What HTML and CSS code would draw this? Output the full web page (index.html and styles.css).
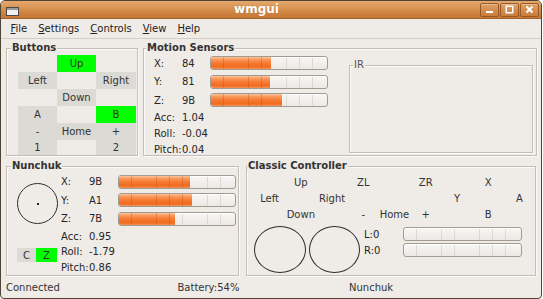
FILE: index.html
```html
<!DOCTYPE html>
<html>
<head>
<meta charset="utf-8">
<title>wmgui</title>
<link rel="stylesheet" href="styles.css">
</head>
<body>
<div class="window">
  <div class="titlebar">
    <svg class="winicon" width="13" height="9" viewBox="0 0 13 9"><rect x="0.5" y="0.5" width="12" height="8" fill="#f2f2f2" stroke="#4a4a4a"/><rect x="1" y="1" width="11" height="2" fill="#9a9a9a"/></svg>
    <div class="title">wmgui</div>
    <div class="wbtns">
      <div class="wbtn"><svg width="17" height="12" viewBox="0 0 17 12"><rect x="5" y="7" width="7" height="2" fill="#fff"/></svg></div>
      <div class="wbtn"><svg width="17" height="12" viewBox="0 0 17 12"><rect x="5.25" y="2.25" width="6.5" height="6.5" fill="none" stroke="#fff" stroke-width="1.5"/></svg></div>
      <div class="wbtn"><svg width="17" height="12" viewBox="0 0 17 12"><path d="M5.5 2.5 L11.5 8.5 M11.5 2.5 L5.5 8.5" stroke="#fff" stroke-width="2" fill="none"/></svg></div>
    </div>
  </div>
  <div class="menubar">
    <span class="menu"><u>F</u>ile</span>
    <span class="menu"><u>S</u>ettings</span>
    <span class="menu"><u>C</u>ontrols</span>
    <span class="menu"><u>V</u>iew</span>
    <span class="menu"><u>H</u>elp</span>
  </div>
  <div class="content">
    <div class="row row-top">
      <section class="frame frame-buttons">
        <div class="ftitle">Buttons</div>
        <div class="bgrid">
          <div class="cell"></div><div class="cell on">Up</div><div class="cell"></div>
          <div class="cell g">Left</div><div class="cell"></div><div class="cell g">Right</div>
          <div class="cell"></div><div class="cell g">Down</div><div class="cell"></div>
          <div class="cell g">A</div><div class="cell"></div><div class="cell on">B</div>
          <div class="cell g">-</div><div class="cell g">Home</div><div class="cell g">+</div>
          <div class="cell g">1</div><div class="cell"></div><div class="cell g">2</div>
        </div>
      </section>
      <section class="frame frame-motion">
        <div class="ftitle">Motion Sensors</div>
        <div class="mgrid">
          <span>X:</span><span>84</span><div class="bar"><div class="fill" style="width:51.76%"></div></div>
          <span>Y:</span><span>81</span><div class="bar"><div class="fill" style="width:50.59%"></div></div>
          <span>Z:</span><span>9B</span><div class="bar"><div class="fill" style="width:60.78%"></div></div>
          <span>Acc:</span><span>1.04</span><span></span>
          <span>Roll:</span><span>-0.04</span><span></span>
          <span>Pitch:</span><span>0.04</span><span></span>
          <section class="frame frame-ir">
            <div class="ftitle plain">IR</div>
          </section>
        </div>
      </section>
    </div>
    <div class="row row-bottom">
      <section class="frame frame-nunchuk">
        <div class="ftitle">Nunchuk</div>
        <div class="ngrid">
          <div class="nstick"><div class="dot"></div></div>
          <div class="cz"><div class="cell g czc">C</div><div class="cell on czz">Z</div></div>
          <span class="c2 r1">X:</span><span class="c3 r1">9B</span><div class="bar c4 r1"><div class="fill" style="width:60.78%"></div></div>
          <span class="c2 r2">Y:</span><span class="c3 r2">A1</span><div class="bar c4 r2"><div class="fill" style="width:63.14%"></div></div>
          <span class="c2 r3">Z:</span><span class="c3 r3">7B</span><div class="bar c4 r3"><div class="fill" style="width:48.24%"></div></div>
          <span class="c2 r4">Acc:</span><span class="c3 r4">0.95</span>
          <span class="c2 r5">Roll:</span><span class="c3 r5">-1.79</span>
          <span class="c2 r6">Pitch:</span><span class="c3 r6">0.86</span>
        </div>
      </section>
      <section class="frame frame-classic">
        <div class="ftitle">Classic Controller</div>
        <div class="cgrid">
          <span class="k1">Up</span><span class="k3">ZL</span><span class="k5">ZR</span><span class="k7">X</span>
          <span class="k0">Left</span><span class="k2">Right</span><span class="k6">Y</span><span class="k8">A</span>
          <span class="k1">Down</span><span class="k3">-</span><span class="k4">Home</span><span class="k5">+</span><span class="k7">B</span>
        </div>
        <div class="cbottom">
          <div class="stick s1"></div>
          <div class="stick s2"></div>
          <div class="lrgrid">
            <span>L:0</span><div class="bar wide"><div class="fill" style="width:0%"></div></div>
            <span>R:0</span><div class="bar wide"><div class="fill" style="width:0%"></div></div>
          </div>
        </div>
      </section>
    </div>
  </div>
  <div class="statusbar">
    <span>Connected</span>
    <span>Battery:54%</span>
    <span>Nunchuk</span>
  </div>
</div>
</body>
</html>
```
FILE: styles.css
```css
* { box-sizing: border-box; margin: 0; padding: 0; }
html, body { background: #ffffff; }
body {
  width: 543px;
  height: 299px;
  overflow: hidden;
  font-family: "DejaVu Sans", "Bitstream Vera Sans", sans-serif;
  font-size: 10px;
  color: #262626;
}
.window {
  width: 542px;
  height: 299px;
  background: #efebe7;
  border: 1px solid #4f4438;
  border-radius: 5px 5px 4px 4px;
  display: flex;
  flex-direction: column;
  overflow: hidden;
}

/* title bar */
.titlebar {
  height: 18px;
  flex: none;
  display: flex;
  align-items: flex-start;
  padding: 0 2px 0 5px;
  background: linear-gradient(#e4a870 0%, #d8914f 45%, #cd8040 75%, #c67735 100%);
  border-bottom: 1px solid #a3622b;
}
.winicon { margin-top: 6px; flex: none; }
.title {
  flex: 1;
  text-align: center;
  padding-left: 14px;
  color: #ffffff;
  font-weight: bold;
  font-size: 12px;
  line-height: 17px;
  text-shadow: 0 0 1px rgba(120, 60, 10, 0.35);
}
.wbtns { display: flex; gap: 1px; margin-top: 2px; }
.wbtn {
  width: 19px;
  height: 14px;
  border: 1px solid #9a5922;
  border-radius: 2px;
  background: linear-gradient(#dea066, #c97c3b);
  box-shadow: inset 0 1px 0 rgba(255, 255, 255, 0.3);
  display: flex;
}

/* menu bar */
.menubar {
  height: 20px;
  flex: none;
  display: flex;
  align-items: center;
  padding-left: 4px;
  border-bottom: 1px solid #d3cdc5;
  color: #222;
}
.menu { padding: 0 5.5px; }
.menu u { text-decoration: underline; text-underline-offset: 1px; }

/* content */
.content {
  height: 237px;
  flex: none;
  padding: 9px 4px 0 5px;
  display: flex;
  flex-direction: column;
  gap: 10px;
}
.row { display: flex; }
.row-top { height: 108px; gap: 5px; }
.row-bottom { height: 110px; gap: 7px; }

.frame {
  border: 1px solid #c4beb6;
  box-shadow: inset 1px 1px 0 #fbfaf9, 1px 1px 0 #fbfaf9;
}
.ftitle {
  margin-top: -7px;
  height: 12px;
  line-height: 12px;
  width: max-content;
  padding: 0 1px;
  background: #efebe7;
  font-weight: bold;
  color: #333;
}
.ftitle.plain { font-weight: normal; color: #555; }

/* buttons */
.frame-buttons { width: 132px; }
.frame-buttons .ftitle { margin-left: 4px; }
.bgrid {
  margin: 1px 0 0 11px;
  display: grid;
  grid-template-columns: 39px 39px 40px;
  grid-template-rows: 17px 17px 17px 17px 17px 15px;
}
.cell {
  display: flex;
  align-items: center;
  justify-content: center;
  color: #333;
}
.cell.g { background: #dcdad5; }
.cell.on { background: #00ff00; }

/* motion */
.frame-motion { flex: 1; }
.frame-motion .ftitle { margin-left: 2px; }
.mgrid {
  margin-left: 10px;
  display: grid;
  grid-template-columns: 28px 28px 118px 1fr;
  grid-template-rows: 18px 19px 18px 16px 17px 14px;
  align-items: center;
}
.frame-ir {
  grid-column: 4;
  grid-row: 1 / 7;
  align-self: start;
  margin: 11px 3px 0 21px;
  height: 88px;
}
.frame-ir .ftitle { margin-left: 3px; }

/* progress bars */
.bar {
  height: 14px;
  border: 1px solid #a29b92;
  border-radius: 3px;
  overflow: hidden;
  background:
    repeating-linear-gradient(90deg, transparent 0 12px, #dcd8d2 12px 12.7px),
    linear-gradient(#f8f7f5, #ece9e5);
  box-shadow: inset 0 1px 0 #fff;
}
.fill {
  height: 100%;
  background:
    repeating-linear-gradient(90deg, transparent 0 12px, rgba(190, 80, 15, 0.35) 12px 12.7px),
    linear-gradient(#fbc49e 0%, #f8975a 22%, #f57b33 50%, #f06b1e 82%, #f5945a 100%);
}

/* nunchuk */
.frame-nunchuk { width: 233px; }
.frame-nunchuk .ftitle { margin-left: 4px; }
.ngrid {
  margin-left: 10px;
  display: grid;
  grid-template-columns: 44px 28px 29px 118px;
  grid-template-rows: 19px 18px 19px 16px 15px 16px;
  align-items: center;
}
.c2 { grid-column: 2; }
.c3 { grid-column: 3; }
.c4 { grid-column: 4; }
.r1 { grid-row: 1; }
.r2 { grid-row: 2; }
.r3 { grid-row: 3; }
.r4 { grid-row: 4; }
.r5 { grid-row: 5; }
.r6 { grid-row: 6; }
.c3.r6 { grid-column: 2 / 4; padding-left: 28px; }
.nstick {
  grid-column: 1;
  grid-row: 1 / 4;
  align-self: start;
  margin-top: 11px;
  width: 41px;
  height: 41px;
  border: 1px solid #2f2f2f;
  border-radius: 50%;
  display: flex;
  align-items: center;
  justify-content: center;
}
.dot { width: 2px; height: 2px; background: #222; }
.cz {
  grid-column: 1;
  grid-row: 5 / 7;
  align-self: start;
  margin-top: 4px;
  display: flex;
  height: 14px;
}
.czc { width: 19px; }
.czz { width: 21px; }

/* classic */
.frame-classic { width: 290px; }
.frame-classic .ftitle { margin-left: 0; }
.cgrid {
  margin: 2px 0 0 7px;
  display: grid;
  grid-template-columns: repeat(9, 1fr);
  grid-template-rows: 16px 16px 16px;
  align-items: center;
  justify-items: center;
  color: #333;
}
.k0 { grid-column: 1; }
.k1 { grid-column: 2; }
.k2 { grid-column: 3; }
.k3 { grid-column: 4; }
.k4 { grid-column: 5; }
.k5 { grid-column: 6; }
.k6 { grid-column: 7; }
.k7 { grid-column: 8; }
.k8 { grid-column: 9; }
.cbottom {
  margin: 4px 0 0 7px;
  display: flex;
  align-items: flex-start;
}
.stick {
  height: 47px;
  border: 1px solid #2f2f2f;
  border-radius: 50%;
}
.s1 { width: 52px; }
.s2 { width: 51px; margin-left: 3px; }
.lrgrid {
  margin-left: 4px;
  display: grid;
  grid-template-columns: 39px 119px;
  grid-template-rows: 16px 16px;
  align-items: center;
}

/* status bar */
.statusbar {
  height: 22px;
  flex: none;
  display: grid;
  grid-template-columns: 171.5px 171.5px 171.5px;
  align-items: center;
  padding-left: 5px;
  color: #333;
}
```
